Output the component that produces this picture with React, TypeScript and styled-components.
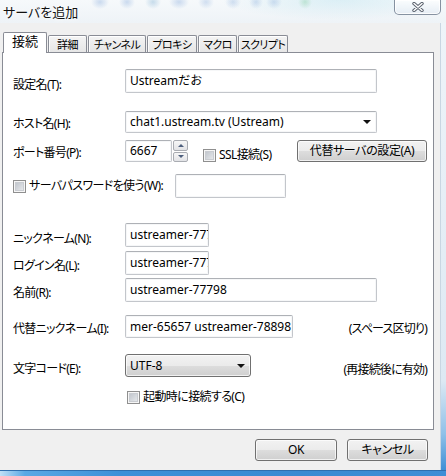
import React from "react";
import styled, { createGlobalStyle } from "styled-components";

const UI_FONT = `"Noto Sans", "Noto Sans CJK JP", sans-serif`;

const GlobalStyle = createGlobalStyle`
  html, body { margin: 0; padding: 0; background: #ffffff; }
  body { font-family: ${UI_FONT}; }
`;

/* ---------- window chrome ---------- */

const Window = styled.div`
  width: 446px;
  height: 476px;
  display: grid;
  grid-template-columns: 440px 6px;
  grid-template-rows: 23px 447px 6px;
  overflow: hidden;
  font-family: ${UI_FONT};
  font-size: 12px;
  font-feature-settings: "palt" 1;
  color: #000;
  background: #eef3f8;
`;

const TitleBar = styled.div`
  grid-column: 1 / 3;
  display: flex;
  align-items: flex-start;
  justify-content: space-between;
  background:
    radial-gradient(ellipse 9px 7px at 100px 2px, rgba(120, 160, 215, 0.35), transparent),
    radial-gradient(ellipse 8px 7px at 127px 2px, rgba(120, 160, 215, 0.35), transparent),
    radial-gradient(ellipse 8px 7px at 153px 2px, rgba(110, 165, 205, 0.35), transparent),
    radial-gradient(ellipse 10px 7px at 179px 2px, rgba(120, 160, 215, 0.35), transparent),
    radial-gradient(ellipse 8px 7px at 206px 2px, rgba(120, 160, 215, 0.3), transparent),
    radial-gradient(ellipse 8px 7px at 233px 2px, rgba(120, 160, 215, 0.3), transparent),
    radial-gradient(ellipse 7px 7px at 256px 2px, rgba(120, 160, 215, 0.3), transparent),
    radial-gradient(ellipse 8px 7px at 274px 2px, rgba(120, 160, 215, 0.3), transparent),
    radial-gradient(ellipse 7px 7px at 305px 2px, rgba(120, 200, 150, 0.35), transparent),
    radial-gradient(ellipse 120px 20px at 340px 0px, rgba(170, 220, 235, 0.35), transparent),
    linear-gradient(#f6f9fb, #eef3f7);
`;

const Title = styled.div`
  padding: 4px 0 0 3px;
  font-size: 13px;
  line-height: 16px;
  color: #111;
  text-shadow: 0 0 6px #fff, 0 0 3px #fff;
`;

const CloseButton = styled.div`
  width: 45px;
  height: 14px;
  margin-right: 5px;
  border: 1px solid rgba(95, 110, 130, 0.75);
  border-top: none;
  border-radius: 0 0 5px 5px;
  background: linear-gradient(rgba(255, 255, 255, 0.75), rgba(228, 236, 244, 0.8));
  box-shadow: inset 0 0 0 1px rgba(255, 255, 255, 0.85);
  display: flex;
  align-items: center;
  justify-content: center;
`;

const RightFrame = styled.div`
  background: linear-gradient(#eef4f9 0%, #dde9f3 80%, #8fc0e8 92%, #3f8fd6 100%);
  border-left: 1px solid #c9d6e2;
`;

const BottomFrame = styled.div`
  grid-column: 1 / 3;
  background: linear-gradient(90deg, #bfe0f6 0px, #5aa8e4 25px, #3d90d8 120px, #3a8ad2 300px, #3f8ed6 446px);
  border-top: 1px solid #2f6fae;
`;

/* ---------- client area ---------- */

const Client = styled.div`
  background: #f0f0f0;
  display: flex;
  flex-direction: column;
  padding: 9px 0 0 2px;
`;

const TabStrip = styled.div`
  display: flex;
  align-items: flex-end;
  gap: 1px;
  height: 20px;
  padding-left: 1px;
`;

const Tab = styled.div<{ $active?: boolean; $w: number }>`
  box-sizing: border-box;
  width: ${(p) => p.$w}px;
  height: ${(p) => (p.$active ? 21 : 17)}px;
  margin-bottom: ${(p) => (p.$active ? -1 : 0)}px;
  position: relative;
  z-index: ${(p) => (p.$active ? 2 : 0)};
  border: 1px solid #898c95;
  border-bottom: none;
  border-radius: 2px 2px 0 0;
  background: ${(p) => (p.$active ? "#ffffff" : "linear-gradient(#f4f4f4, #e6e6e6)")};
  box-shadow: ${(p) => (p.$active ? "none" : "inset 0 1px 0 #fff, inset 1px 0 0 #fbfbfb")};
  display: flex;
  justify-content: center;
  align-items: flex-start;
  padding-top: ${(p) => (p.$active ? 1 : 1)}px;
  font-size: ${(p) => (p.$active ? 13 : 11)}px;
  letter-spacing: ${(p) => (p.$active ? 0 : -0.6)}px;
  line-height: 15px;
  color: #000;
  white-space: nowrap;
`;

const Panel = styled.div`
  box-sizing: border-box;
  width: 432px;
  height: 378px;
  border: 1px solid #898c95;
  background: #ffffff;
  display: flex;
  flex-direction: column;
  padding: 0 6px 0 10px;
`;

const Row = styled.div<{ $top: number; $h: number }>`
  display: flex;
  align-items: flex-start;
  margin-top: ${(p) => p.$top}px;
  height: ${(p) => p.$h}px;
`;

const Label = styled.div<{ $dy: number }>`
  width: 112px;
  flex: none;
  padding-top: ${(p) => p.$dy}px;
  line-height: 14px;
  letter-spacing: -0.7px;
  white-space: nowrap;
`;

const Hint = styled.div<{ $dy: number }>`
  margin-left: auto;
  padding-top: ${(p) => p.$dy}px;
  line-height: 14px;
  letter-spacing: -0.8px;
  white-space: nowrap;
`;

const Field = styled.div<{ $w: number; $h: number }>`
  box-sizing: border-box;
  width: ${(p) => p.$w}px;
  height: ${(p) => p.$h}px;
  flex: none;
  border: 1px solid #c3c6cb;
  border-top-color: #aeb1b6;
  border-radius: 2px;
  box-shadow: inset 0 0 0 1px #f6f7f8;
  background: #fff;
  padding: 0 4px;
  display: flex;
  align-items: center;
  overflow: hidden;
  white-space: nowrap;
  line-height: 14px;
`;

const ComboField = styled(Field)`
  justify-content: space-between;
  padding-right: 5px;
`;

const Arrow = styled.span`
  width: 0;
  height: 0;
  border-left: 4px solid transparent;
  border-right: 4px solid transparent;
  border-top: 4px solid #111;
  flex: none;
`;

const DropList = styled.div<{ $w: number; $h: number }>`
  box-sizing: border-box;
  width: ${(p) => p.$w}px;
  height: ${(p) => p.$h}px;
  flex: none;
  border: 1px solid #707070;
  border-radius: 3px;
  background: linear-gradient(#f2f2f2 0%, #ebebeb 50%, #dddddd 51%, #cfcfcf 100%);
  box-shadow: inset 0 0 0 1px rgba(255, 255, 255, 0.7);
  display: flex;
  align-items: center;
  justify-content: space-between;
  padding: 0 5px 0 4px;
  line-height: 14px;
`;

const SpinBox = styled.div`
  display: flex;
  flex: none;
  height: 22px;
`;

const SpinButtons = styled.div`
  display: flex;
  flex-direction: column;
  gap: 1px;
  width: 15px;
  padding: 0 0 0 1px;
`;

const SpinButton = styled.div`
  flex: 1;
  box-sizing: border-box;
  border: 1px solid #a9acb2;
  border-radius: 2px;
  background: linear-gradient(#f7f7f7, #e2e3e6);
  display: flex;
  align-items: center;
  justify-content: center;
`;

const SpinArrow = styled.span<{ $up?: boolean }>`
  width: 0;
  height: 0;
  border-left: 3px solid transparent;
  border-right: 3px solid transparent;
  ${(p) => (p.$up ? "border-bottom: 3px solid #4d5f7d;" : "border-top: 3px solid #4d5f7d;")}
`;

const CheckLabel = styled.label<{ $w?: number; $dy: number; $ml?: number }>`
  display: flex;
  align-items: center;
  gap: 3px;
  flex: none;
  ${(p) => (p.$w ? `width: ${p.$w}px;` : "")}
  margin-left: ${(p) => p.$ml ?? 0}px;
  padding-top: ${(p) => p.$dy}px;
  line-height: 14px;
  letter-spacing: -0.6px;
  white-space: nowrap;
`;

const CheckBox = styled.span`
  box-sizing: border-box;
  width: 13px;
  height: 13px;
  flex: none;
  border: 1px solid #8f8f8f;
  background: linear-gradient(135deg, #b9bec6, #eef0f2);
  box-shadow: inset 0 0 0 1px #f6f6f6, inset 0 0 0 2px #c9ccd1;
`;

const PushButton = styled.div<{ $w: number; $ml?: string }>`
  box-sizing: border-box;
  width: ${(p) => p.$w}px;
  height: 22px;
  flex: none;
  margin-left: ${(p) => p.$ml ?? "0"};
  border: 1px solid #707070;
  border-radius: 3px;
  background: linear-gradient(#f2f2f2 0%, #ebebeb 50%, #dddddd 51%, #cfcfcf 100%);
  box-shadow: inset 0 0 0 1px rgba(255, 255, 255, 0.7);
  display: flex;
  align-items: center;
  justify-content: center;
  line-height: 14px;
  letter-spacing: -0.4px;
  white-space: nowrap;
`;

const ButtonBar = styled.div`
  display: flex;
  justify-content: flex-end;
  gap: 10px;
  margin-top: 9px;
  padding-right: 12px;
`;

const CloseGlyph = () => (
  <svg width="12" height="10" viewBox="0 0 12 10">
    <path d="M2 1.5 L10 8.5 M10 1.5 L2 8.5" stroke="#59616d" strokeWidth="3.4" strokeLinecap="round" />
    <path d="M2 1.5 L10 8.5 M10 1.5 L2 8.5" stroke="#ffffff" strokeWidth="1.5" strokeLinecap="round" />
  </svg>
);

const tabs: { label: string; w: number; active?: boolean }[] = [
  { label: "接続", w: 44, active: true },
  { label: "詳細", w: 39 },
  { label: "チャンネル", w: 58 },
  { label: "プロキシ", w: 50 },
  { label: "マクロ", w: 39 },
  { label: "スクリプト", w: 50 },
];

export default function App() {
  return (
    <>
      <GlobalStyle />
      <Window>
        <TitleBar>
          <Title>サーバを追加</Title>
          <CloseButton>
            <CloseGlyph />
          </CloseButton>
        </TitleBar>

        <Client>
          <TabStrip>
            {tabs.map((t) => (
              <Tab key={t.label} $w={t.w} $active={t.active}>
                {t.label}
              </Tab>
            ))}
          </TabStrip>

          <Panel>
            <Row $top={16} $h={24}>
              <Label $dy={9}>設定名(T):</Label>
              <Field $w={252} $h={24}>Ustreamだお</Field>
            </Row>

            <Row $top={18} $h={22}>
              <Label $dy={6}>ホスト名(H):</Label>
              <ComboField $w={252} $h={22}>
                <span>chat1.ustream.tv (Ustream)</span>
                <Arrow />
              </ComboField>
            </Row>

            <Row $top={7} $h={22}>
              <Label $dy={6}>ポート番号(P):</Label>
              <SpinBox>
                <Field $w={47} $h={22}>6667</Field>
                <SpinButtons>
                  <SpinButton>
                    <SpinArrow $up />
                  </SpinButton>
                  <SpinButton>
                    <SpinArrow />
                  </SpinButton>
                </SpinButtons>
              </SpinBox>
              <CheckLabel $dy={8} $ml={15}>
                <CheckBox />
                SSL接続(S)
              </CheckLabel>
              <PushButton $w={130} $ml="auto">代替サーバの設定(A)</PushButton>
            </Row>

            <Row $top={12} $h={24}>
              <CheckLabel $w={162} $dy={5}>
                <CheckBox />
                サーバパスワードを使う(W):
              </CheckLabel>
              <Field $w={111} $h={24} />
            </Row>

            <Row $top={25} $h={24}>
              <Label $dy={9}>ニックネーム(N):</Label>
              <Field $w={84} $h={24}>ustreamer-77798</Field>
            </Row>

            <Row $top={4} $h={24}>
              <Label $dy={8}>ログイン名(L):</Label>
              <Field $w={84} $h={24}>ustreamer-77798</Field>
            </Row>

            <Row $top={3} $h={24}>
              <Label $dy={8}>名前(R):</Label>
              <Field $w={252} $h={24}>ustreamer-77798</Field>
            </Row>

            <Row $top={13} $h={23}>
              <Label $dy={7}>代替ニックネーム(I):</Label>
              <Field $w={168} $h={23}>mer-65657 ustreamer-78898</Field>
              <Hint $dy={7}>(スペース区切り)</Hint>
            </Row>

            <Row $top={16} $h={23}>
              <Label $dy={8}>文字コード(E):</Label>
              <DropList $w={126} $h={23}>
                <span>UTF-8</span>
                <Arrow />
              </DropList>
              <Hint $dy={9}>(再接続後に有効)</Hint>
            </Row>

            <Row $top={13} $h={14}>
              <CheckLabel $dy={0} $ml={114}>
                <CheckBox />
                起動時に接続する(C)
              </CheckLabel>
            </Row>
          </Panel>

          <ButtonBar>
            <PushButton $w={82}>OK</PushButton>
            <PushButton $w={81}>キャンセル</PushButton>
          </ButtonBar>
        </Client>

        <RightFrame />
        <BottomFrame />
      </Window>
    </>
  );
}
